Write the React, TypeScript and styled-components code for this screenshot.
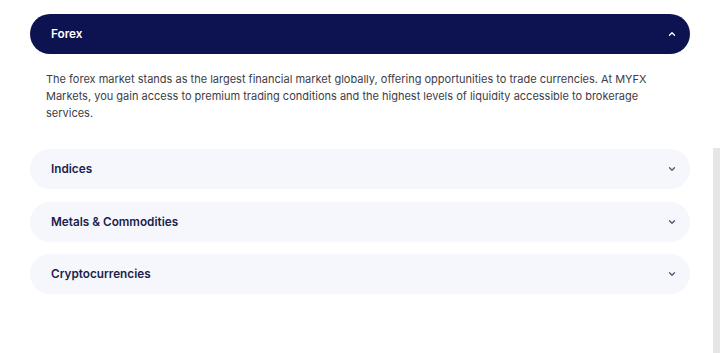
import React, { useState } from 'react'
import styled, { createGlobalStyle } from 'styled-components'

const GlobalStyle = createGlobalStyle`
  html, body {
    margin: 0;
    padding: 0;
    background: #ffffff;
  }
  body {
    font-family: Inter, "Noto Sans", "Liberation Sans", sans-serif;
  }
`

const Page = styled.div`
  display: flex;
  height: 353px;
  padding-left: 30px;
  box-sizing: border-box;
  overflow: hidden;
`

const List = styled.div`
  width: 660px;
  padding-top: 14px;
  display: flex;
  flex-direction: column;
`

const Item = styled.div<{ $open: boolean }>`
  margin-bottom: ${p => (p.$open ? '0' : '12.5px')};
`

const Header = styled.button<{ $open: boolean }>`
  all: unset;
  box-sizing: border-box;
  width: 100%;
  height: 40px;
  padding: 0 14px 0 21px;
  border-radius: 20px;
  display: flex;
  align-items: center;
  justify-content: space-between;
  cursor: pointer;
  background: ${p => (p.$open ? '#0d1350' : '#f6f7fd')};
  color: ${p => (p.$open ? '#ffffff' : '#1b1f4b')};
  font-family: Inter, "Noto Sans", "Liberation Sans", sans-serif;
  font-size: 11.75px;
  font-weight: 600;
`

const Chevron = styled.svg<{ $open: boolean }>`
  width: 8px;
  height: 8px;
  transform: ${p => (p.$open ? 'rotate(180deg)' : 'none')};
`

const Body = styled.p`
  margin: 0;
  padding: 17px 16px 27px 16px;
  font-size: 11px;
  line-height: 17px;
  color: #3d3d45;
`

const Strip = styled.div`
  width: 7px;
  margin-left: 23px;
  margin-top: 148px;
  background: #e6e6e6;
`

const items = [
  {
    title: 'Forex',
    body: 'The forex market stands as the largest financial market globally, offering opportunities to trade currencies. At MYFX Markets, you gain access to premium trading conditions and the highest levels of liquidity accessible to brokerage services.',
  },
  { title: 'Indices', body: '' },
  { title: 'Metals & Commodities', body: '' },
  { title: 'Cryptocurrencies', body: '' },
]

export default function App() {
  const [open, setOpen] = useState(0)

  return (
    <>
      <GlobalStyle />
      <Page>
        <List>
          {items.map((it, i) => (
            <Item key={it.title} $open={open === i}>
              <Header $open={open === i} onClick={() => setOpen(open === i ? -1 : i)}>
                {it.title}
                <Chevron $open={open === i} viewBox="0 0 8 8">
                  <path d="M1.5 2.8 L4 5.2 L6.5 2.8" fill="none" stroke="currentColor" strokeWidth="1.3" strokeLinecap="round" strokeLinejoin="round" opacity={open === i ? 1 : 0.75} />
                </Chevron>
              </Header>
              {open === i && <Body>{it.body}</Body>}
            </Item>
          ))}
        </List>
        <Strip />
      </Page>
    </>
  )
}
